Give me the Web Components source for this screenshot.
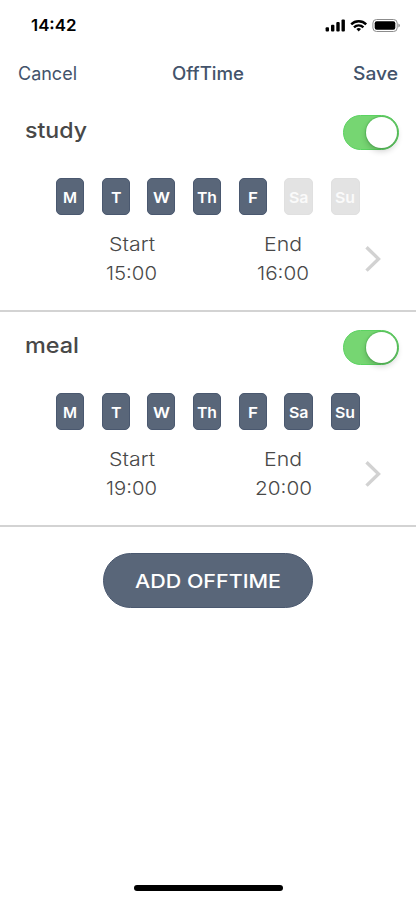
<!DOCTYPE html>
<html lang="en">
<head>
<meta charset="utf-8">
<title>OffTime</title>
<style>
body{margin:0;background:#fff;font-family:Inter,"Liberation Sans",sans-serif;color:#484848}
</style>
</head>
<body>
<offtime-app></offtime-app>
<script>
const define = (name, render) => customElements.define(name, class extends HTMLElement {
  connectedCallback() {
    if (this.shadowRoot) return;
    this.attachShadow({mode: 'open'}).innerHTML = render(this);
  }
});
const a = (el, n, d = '') => el.getAttribute(n) ?? d;

// A single line of type set to an exact measure: w (width), size, weight, h (line height), base (baseline).
define('type-line', el => {
  const w = +a(el, 'w'), h = +a(el, 'h', 24);
  return `<style>:host{display:block;flex:none;width:${w}px;height:${h}px}svg{display:block;overflow:visible}</style>
  <svg width="${w}" height="${h}"><text x="0" y="${a(el, 'base', 18)}" textLength="${w}" lengthAdjust="spacingAndGlyphs" fill="currentColor" font-size="${a(el, 'size', 18)}" font-weight="${a(el, 'weight', 400)}">${a(el, 'text')}</text></svg>`;
});

define('status-bar', () => `<style>
:host{display:flex;height:50px;box-sizing:border-box;padding:13px 16px 0 30.500px;justify-content:space-between;color:#000}
svg{display:block;margin-top:5px}
</style>
<type-line text="14:42" w="45.500" size="16.500" weight="600" base="18"></type-line>
<svg width="75" height="16" viewBox="325 18 75 16">
 <rect x="325.6" y="27.2" width="3.4" height="4.3" rx="1"/><rect x="331" y="24.8" width="3.4" height="6.7" rx="1"/>
 <rect x="336.3" y="22" width="3.4" height="9.5" rx="1"/><rect x="341.5" y="19.4" width="3.4" height="12.1" rx="1"/>
 <g fill="none" stroke="#000" stroke-width="2.4"><path d="M351.2 24.3a10.7 10.7 0 0 1 15 0"/><path d="M354 27.3a6.7 6.7 0 0 1 9.400 0"/></g>
 <path d="M358.700 31.400l-2.300-2.400a3.300 3.300 0 0 1 4.600 0z"/>
 <rect x="372.900" y="19.500" width="24.300" height="12" rx="3.600" fill="none" stroke="#8c8c8c"/>
 <rect x="374.700" y="21.300" width="20.600" height="8.500" rx="2"/>
 <path d="M398.400 23.600q1.500.6 1.500 2t-1.500 2z" fill="#8c8c8c"/>
</svg>`);

define('nav-bar', () => `<style>
:host{display:grid;grid-template-columns:1fr auto 1fr;height:47px;box-sizing:border-box;padding:12px 18px 0 17.5px;color:#43536b}
type-line:last-child{justify-self:end}
</style>
<type-line text="Cancel" w="59" size="18.3" base="18"></type-line>
<type-line text="OffTime" w="72" size="18.3" weight="500" base="18"></type-line>
<type-line text="Save" w="45" size="18.3" weight="500" base="18"></type-line>`);

define('toggle-switch', () => `<style>
:host{display:block;width:56.5px;height:34.500px;box-sizing:border-box;border-radius:18px;background:#76d672;border:1px solid #5bd361;padding:.5px 1px}
i{display:block;width:31.500px;height:31.500px;border-radius:50%;background:#fff;margin-left:auto;box-shadow:0 3px 6px #0003,0 0 1px 1px #2b9d3855}
</style><i></i>`);

define('day-tile', el => {
  const w = a(el, 'wide') !== '' ? 29 : 28;
  const off = el.hasAttribute('off');
  return `<style>:host{display:flex;width:${w}px;height:36.500px;box-sizing:border-box;align-items:center;justify-content:center;border-radius:5px;
  background:${off ? '#e3e3e3' : '#596679'};border:1px solid ${off ? '#e0e0e0' : '#4a586f'};color:${off ? '#fafafa' : '#fff'}}</style>
  <type-line text="${a(el, 'day')}" w="${a(el, 'w')}" h="20" base="15.700" size="14.900" weight="600"></type-line>`;
});

define('time-value', el => `<style>:host{display:flex;flex-direction:column;align-items:center;width:60px;gap:5px}</style>
<type-line text="${a(el, 'label')}" w="${a(el, 'lw')}" size="18.600" weight="300"></type-line>
<type-line text="${a(el, 'time')}" w="${a(el, 'tw')}" size="18.600" weight="300"></type-line>`);

define('offtime-card', el => {
  const off = a(el, 'off').split(',');
  const days = [['M', 14], ['T', 10.5], ['W', 17], ['Th', 20], ['F', 10], ['Sa', 19.5], ['Su', 20]];
  return `<style>
:host{display:block;height:215px;box-sizing:border-box;border-bottom:2px solid #d3d3d3}
header{display:flex;justify-content:space-between;padding:18px 17px 0 25px;height:81.400px;box-sizing:border-box}
.days{display:flex;gap:17.600px;padding-left:56.300px}
.times{display:flex;padding:18.100px 0 0 101.700px;height:94px;box-sizing:border-box;align-items:flex-start}
time-value+time-value{margin-left:91.500px}
.times svg{margin:11.800px 0 0 51px}
</style>
<header><type-line text="${a(el, 'name')}" w="${a(el, 'w')}" size="21.500" weight="500" base="22.500" h="30"></type-line><toggle-switch></toggle-switch></header>
<div class="days">${days.map(([d, w]) => `<day-tile day="${d}" w="${w}" ${d[0] === 'S' ? 'wide="1"' : ''} ${off.includes(d) ? 'off' : ''}></day-tile>`).join('')}</div>
<div class="times">
<time-value label="Start" lw="46" time="${a(el, 'start')}" tw="51"></time-value>
<time-value label="End" lw="38" time="${a(el, 'end')}" tw="${a(el, 'ew')}"></time-value>
<svg width="20" height="28"><path d="M2.500 2.200L14.500 13.900L2.500 25.600" fill="none" stroke="#d2d2d2" stroke-width="3.400"/></svg>
</div>`;
});

define('pill-button', el => `<style>
:host{display:flex;width:210.500px;height:55px;box-sizing:border-box;margin:26px auto 0;border:1px solid #4a586f;border-radius:28px;background:#596679;color:#fff;align-items:center;justify-content:center}
</style><type-line text="${a(el, 'text')}" w="146" size="19.300" weight="500" base="19.300"></type-line>`);

define('offtime-app', () => `<style>
:host{display:flex;flex-direction:column;width:416px;height:900px;overflow:hidden;background:#fff}
footer{margin-top:auto;height:15px}
footer i{display:block;width:149px;height:5.500px;border-radius:3px;background:#000;margin:0 auto}
</style>
<status-bar></status-bar><nav-bar></nav-bar>
<main>
<offtime-card name="study" w="62" start="15:00" end="16:00" ew="52" off="Sa,Su"></offtime-card>
<offtime-card name="meal" w="54" start="19:00" end="20:00" ew="57"></offtime-card>
<pill-button text="ADD OFFTIME"></pill-button>
</main>
<footer><i></i></footer>`);
</script>
</body>
</html>
